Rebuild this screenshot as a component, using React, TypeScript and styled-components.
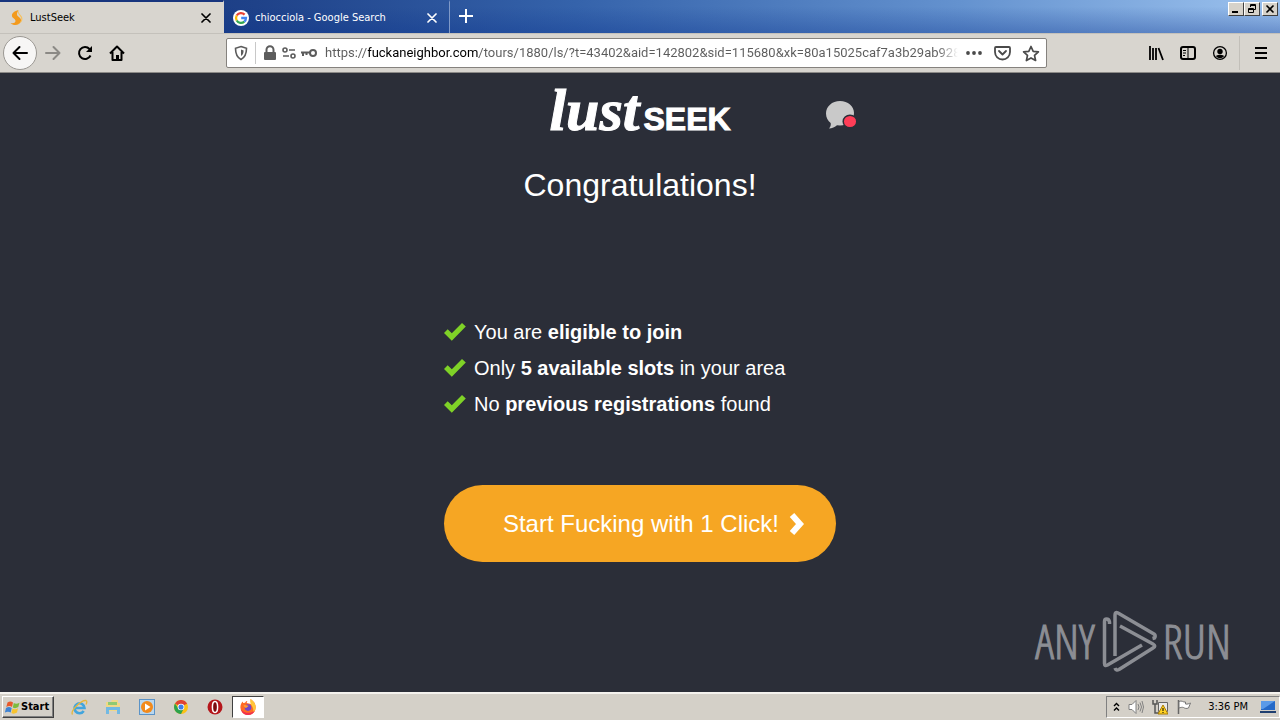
import React from "react";
import styled, { createGlobalStyle } from "styled-components";

const ui = `"DejaVu Sans Condensed", "DejaVu Sans", sans-serif`;

const Global = createGlobalStyle`
  * { box-sizing: border-box; }
  body { margin: 0; background: #2b2e38; font-family: "Liberation Sans", Arial, sans-serif; }
  button { font: inherit; color: inherit; border: 0; padding: 0; background: none; }
  svg { display: block; flex: none; }
`;

const Screen = styled.div`
  min-height: 100vh;
  display: flex;
  flex-direction: column;
`;

const TabStrip = styled.div`
  display: flex;
  height: 33px;
  background:
    linear-gradient(180deg, rgba(10, 36, 106, 0) 20%, rgba(10, 50, 140, 0.35) 100%),
    linear-gradient(90deg, #12307a 0%, #1f4289 20%, #3563ab 45%, #6492cf 75%, #9cc2ee 100%);
  font: 11px/16px ${ui};
`;

const Tab = styled.div<{ $active?: boolean }>`
  display: flex;
  align-items: center;
  gap: 6px;
  width: ${(p) => (p.$active ? 224 : 226)}px;
  padding: 0 8px 0 9px;
  color: ${(p) => (p.$active ? "#000" : "#fff")};
  background: ${(p) => (p.$active ? "#d8d5cf" : "transparent")};
  border-top: 2px solid ${(p) => (p.$active ? "#17357e" : "transparent")};
  border-right: 1px solid ${(p) => (p.$active ? "#d8d5cf" : "#7f99c8")};
`;

const TabTitle = styled.span`
  flex: 1;
  white-space: nowrap;
`;

const IconButton = styled.button`
  display: grid;
  place-items: center;
  width: 32px;
  height: 32px;
`;

const TabClose = styled.button`
  display: grid;
  place-items: center;
  width: 18px;
  height: 18px;
`;

const WindowButtons = styled.div`
  display: flex;
  margin: 2px 2px 0 auto;
  height: 14px;
`;

const WindowButton = styled.button<{ $gap?: boolean }>`
  display: grid;
  place-items: center;
  width: 16px;
  height: 14px;
  margin-left: ${(p) => (p.$gap ? 2 : 0)}px;
  background: #d6d2ca;
  border: 1px solid;
  border-color: #fff #404040 #404040 #fff;
`;

const Toolbar = styled.div`
  display: flex;
  align-items: center;
  height: 40px;
  padding: 0 3px;
  background: #d8d5cf;
  border-top: 1px solid #c4c1bb;
  border-bottom: 1px solid #8c8a87;
`;

const BackButton = styled.button`
  display: grid;
  place-items: center;
  width: 34px;
  height: 34px;
  border-radius: 50%;
  background: #f7f6f5;
  border: 1px solid #9b9893;
`;

const AddressBar = styled.div`
  display: flex;
  align-items: center;
  flex: 0 1 821px;
  min-width: 0;
  height: 30px;
  margin-left: 93px;
  padding: 0 6px;
  background: #fff;
  border: 1px solid #85827e;
  border-radius: 2px;
`;

const Identity = styled.div`
  display: flex;
  align-items: center;
  gap: 4px;
  margin-left: 6px;
  padding-left: 7px;
  height: 22px;
  border-left: 1px solid #c8c8c8;
`;

const Address = styled.input`
  flex: 1;
  min-width: 0;
  height: 26px;
  margin: 0 8px 0 8px;
  padding: 0;
  border: 0;
  outline: 0;
  font: 13px/26px Roboto, sans-serif;
  color: transparent;
  background: linear-gradient(
    90deg,
    #5c5c5c 43px,
    #000 43px,
    #000 154px,
    #5c5c5c 154px,
    #5c5c5c calc(100% - 20px),
    transparent
  );
  background-clip: text;
  -webkit-background-clip: text;
`;

const PageActions = styled.div`
  display: flex;
  align-items: center;
  gap: 11px;
`;

const ToolbarEnd = styled.div`
  display: flex;
  align-items: center;
  margin-left: auto;
`;

const Divider = styled.span`
  width: 1px;
  height: 34px;
  margin: 0 5px 0 3px;
  background: #c2bfb9;
`;

const Page = styled.main`
  position: relative;
  flex: 1;
  display: flex;
  flex-direction: column;
  align-items: center;
  color: #fff;
  background: #2b2e38;
`;

const Header = styled.header`
  display: grid;
  grid-template-columns: 1fr auto 1fr;
  align-items: center;
  width: 434px;
  max-width: 100%;
  height: 72px;
  margin-top: 1px;
`;

const Logo = styled.a`
  grid-column: 2;
  display: flex;
  align-items: baseline;
  gap: 4px;
  color: #fff;
  text-decoration: none;
`;

const LogoScript = styled.span`
  font: italic bold 60px/72px "Liberation Serif", serif;
  -webkit-text-stroke: 1px #fff;
`;

const LogoCaps = styled.span`
  font: bold 32px/72px "Liberation Sans", sans-serif;
  -webkit-text-stroke: 1px #fff;
`;

const ChatButton = styled.button`
  justify-self: end;
`;

const Title = styled.h1`
  margin: 19px 0 0;
  font-weight: 400;
  font-size: 32px;
  line-height: 40px;
`;

const Checks = styled.ul`
  width: 392px;
  margin: 109px 0 0;
  padding: 0;
  list-style: none;
  font-size: 20px;
  line-height: 36px;
`;

const Check = styled.li`
  display: flex;
  align-items: center;
  gap: 8px;
  white-space: nowrap;
`;

const Cta = styled.button`
  && {
    display: flex;
    align-items: center;
    justify-content: flex-end;
    gap: 10px;
    width: 392px;
    height: 77px;
    margin-top: 63px;
    padding-right: 31px;
    border-radius: 39px;
    background: #f6a623;
    font-size: 24px;
    white-space: nowrap;
  }
`;

const Watermark = styled.div`
  position: absolute;
  right: 49px;
  bottom: 19px;
  display: flex;
  align-items: center;
  gap: 6px;
  color: #8c8e94;
  font: 300 47px/64px "Open Sans Condensed Light", "Open Sans Condensed", "Liberation Sans Narrow", sans-serif;
  -webkit-text-stroke: 1px #8c8e94;
`;

const Taskbar = styled.footer`
  display: flex;
  align-items: center;
  height: 28px;
  background: #d4d0c8;
  border-top: 2px solid #f4f2ee;
  font: 11px/16px ${ui};
`;

const StartButton = styled.button`
  display: flex;
  align-items: center;
  gap: 1px;
  width: 52px;
  height: 22px;
  margin: 0 8px 0 2px;
  padding: 0 2px;
  font-weight: bold;
  background: #d4d0c8;
  border: 1px solid;
  border-color: #fff #404040 #404040 #fff;
  box-shadow: inset -1px -1px #808080;
`;

const TaskButton = styled.button<{ $active?: boolean }>`
  && {
    display: grid;
    place-items: center;
    width: ${(p) => (p.$active ? 32 : 34)}px;
    height: 22px;
    background: ${(p) => (p.$active ? "#fff" : "none")};
    border: ${(p) => (p.$active ? "1px solid" : "0")};
    border-color: #404040 #fff #fff #404040;
  }
`;

const Tray = styled.div`
  display: flex;
  align-items: center;
  gap: 8px;
  height: 22px;
  margin-left: auto;
  padding: 0 3px 0 6px;
  border: 1px solid;
  border-color: #808080 #fff #fff #808080;
`;

const Clock = styled.time`
  margin: 0 4px 0 8px;
  white-space: nowrap;
`;

const Cross = ({ color }: { color: string }) => (
  <svg width="10" height="10" stroke={color} strokeWidth="1.7" strokeLinecap="round">
    <path d="M1 1l8 8M9 1l-8 8" />
  </svg>
);

const GoogleIcon = () => (
  <svg width="16" height="16" viewBox="0 0 16 16" fill="none" strokeWidth="2.3">
    <circle cx="8" cy="8" r="8" fill="#fff" />
    <path d="M11.6 4.6A5 5 0 0 0 3.7 5.5" stroke="#ea4335" />
    <path d="M3.7 5.5a5 5 0 0 0 0 5" stroke="#fbbc05" />
    <path d="M3.7 10.5a5 5 0 0 0 7.6 1.2" stroke="#34a853" />
    <path d="M11.3 11.7A5 5 0 0 0 13 8H8.2" stroke="#4285f4" />
  </svg>
);

const CheckIcon = () => (
  <svg width="22" height="18" viewBox="0 0 22 18">
    <path d="M0 10l3.7-3.7 4.1 4L18 0l3.8 3.4L7.8 17.8z" fill="#7fd227" />
  </svg>
);

const ChromeIcon = () => (
  <svg width="14" height="14" viewBox="0 0 16 16">
    <circle cx="8" cy="8" r="8" fill="#fbc116" />
    <path d="M8 8L1.1 4A8 8 0 0 1 15 4z" fill="#df4335" />
    <path d="M1.1 4A8 8 0 0 0 8 16l3-6-5 1z" fill="#2da24d" />
    <circle cx="8" cy="8" r="3.8" fill="#fff" />
    <circle cx="8" cy="8" r="2.9" fill="#3f7fe8" />
  </svg>
);

const FirefoxIcon = () => (
  <svg width="16" height="16" viewBox="0 0 16 16">
    <path d="M8 16a7.6 7.6 0 0 1-7.6-8C.4 5.500 1.700 3.600 2.600 2.400L3.200 4l1.900-.2C5.500 2.500 6.500 2 7.300 2l-.6 2L11 5c.4-2-.8-3.200-.4-5 3 2 5.100 4.700 5.100 8.300A7.700 7.700 0 0 1 8 16z" fill="#ff6a26" />
    <path d="M10.600 0c3 2 5.100 4.700 5.100 8.300 0 2-1 4.400-2.700 5.800 1-3-.1-6-2-8.700-.9-1.600-1-3.500-.4-5.400z" fill="#ffc63a" />
    <path d="M1 10.500C2 14.500 5 16 8 16c3.500 0 6-2 7-4.500C11 15 4.500 14.500 1 10.500z" fill="#f1304f" />
    <circle cx="8" cy="8.600" r="3.300" fill="#7048c8" />
    <path d="M3.500 6.500c2-1 3.200.3 5 .2-.3 1.300-2 1.300-2.300 2.300-1.300 0-2.200-1-2.700-2.500z" fill="#ff9d2f" />
  </svg>
);

export default function App() {
  return (
    <Screen>
      <Global />
      <TabStrip>
        <Tab $active>
          <svg width="15" height="16" viewBox="0 0 15 16">
            <path d="M9.500 0C5 1 2.500 3.500 3 6.200c.4 2 3.600 2.600 3.500 4.800C6.400 13 4 13.500 1.500 13c3 3.500 9.500 2.500 10.500-2 .7-3.500-3.800-4-4-6.500C7.900 2.500 9 1.500 9.500 0z" fill="#f39a1d" />
            <path d="M9.500 0C8.500 2.500 9 4 11 6c2.500 3 1.500 7-3 8.500C14 13 14.500 8 12 5.500 10.500 4 9.500 2.500 9.500 0z" fill="#f7c05c" />
          </svg>
          <TabTitle>LustSeek</TabTitle>
          <TabClose aria-label="Close tab"><Cross color="#000" /></TabClose>
        </Tab>
        <Tab>
          <GoogleIcon />
          <TabTitle>chiocciola - Google Search</TabTitle>
          <TabClose aria-label="Close tab"><Cross color="#fff" /></TabClose>
        </Tab>
        <IconButton aria-label="New tab">
          <svg width="14" height="14" stroke="#fff" strokeWidth="2"><path d="M7 0v14M0 7h14" /></svg>
        </IconButton>
        <WindowButtons>
          <WindowButton aria-label="Minimize">
            <svg width="10" height="10"><path d="M1 7h6v2H1z" /></svg>
          </WindowButton>
          <WindowButton aria-label="Restore">
            <svg width="10" height="10" fill="none" stroke="#000"><path d="M3.500 3V.500h5v5H6.500M3 1.500h6M1.500 4.500h5v4h-5zM1 5.500h6" /></svg>
          </WindowButton>
          <WindowButton $gap aria-label="Close">
            <svg width="10" height="10" stroke="#000" strokeWidth="1.600"><path d="M1.500 1.500l7 7M8.500 1.500l-7 7" /></svg>
          </WindowButton>
        </WindowButtons>
      </TabStrip>

      <Toolbar>
        <BackButton aria-label="Back">
          <svg width="16" height="16" fill="none" stroke="#000" strokeWidth="2" strokeLinecap="round" strokeLinejoin="round"><path d="M15 8H1.500M7.500 2l-6 6 6 6" /></svg>
        </BackButton>
        <IconButton aria-label="Forward">
          <svg width="16" height="16" fill="none" stroke="#8b8985" strokeWidth="2" strokeLinecap="round" strokeLinejoin="round"><path d="M1 8h13.500M8.500 2l6 6-6 6" /></svg>
        </IconButton>
        <IconButton aria-label="Reload">
          <svg width="16" height="16" fill="none" stroke="#000" strokeWidth="2"><path d="M13.500 10.500A6 6 0 1 1 12.500 4L14 5.500" /><path d="M15 1v6H9z" fill="#000" stroke="none" /></svg>
        </IconButton>
        <IconButton aria-label="Home">
          <svg width="16" height="16" fill="none" stroke="#000" strokeWidth="2" strokeLinejoin="round"><path d="M1 8.500L8 1.500l7 7M3.500 7v8h9V7" /><path d="M7 15v-5h3v5z" fill="#000" stroke="none" /></svg>
        </IconButton>
        <AddressBar>
          <svg width="16" height="16" fill="none" stroke="#5c5c5c" strokeWidth="1.600"><path d="M8 1.500l5.500 1.800C13.500 9 12 12.500 8 14.500 4 12.500 2.500 9 2.500 3.300z" /><path d="M8 4.500V11c2-1.500 2.500-3 2.600-5.600z" fill="#5c5c5c" stroke="none" /></svg>
          <Identity>
            <svg width="14" height="16"><path d="M3.500 7V4.800a3.500 3.500 0 0 1 7 0V7" fill="none" stroke="#5c5c5c" strokeWidth="2" /><rect x="1" y="7" width="12" height="8" rx="1" fill="#5c5c5c" /></svg>
            <svg width="16" height="16" fill="none" stroke="#5c5c5c" strokeWidth="1.600"><circle cx="4" cy="5" r="2" /><path d="M8 5h6M2 11h6" /><circle cx="12" cy="11" r="2" /></svg>
            <svg width="16" height="16" fill="none" stroke="#5c5c5c" strokeWidth="2"><circle cx="12" cy="8" r="3" /><path d="M9 7.500H0M2 8v3M5.500 8v2" /></svg>
          </Identity>
          <Address
            aria-label="Address"
            readOnly
            value="https://fuckaneighbor.com/tours/1880/ls/?t=43402&aid=142802&sid=115680&xk=80a15025caf7a3b29ab928e"
          />
          <PageActions>
            <svg width="17" height="16" fill="#4a4a4a"><circle cx="2" cy="8" r="1.900" /><circle cx="8" cy="8" r="1.900" /><circle cx="14" cy="8" r="1.900" /></svg>
            <svg width="17" height="16" fill="none" stroke="#4a4a4a" strokeWidth="1.800" strokeLinecap="round" strokeLinejoin="round"><path d="M2 2h13q1 0 1 1v4a7.500 7.500 0 0 1-15 0V3q0-1 1-1z" /><path d="M5 6l3.500 3.500L12 6" /></svg>
            <svg width="18" height="17" fill="none" stroke="#4a4a4a" strokeWidth="1.700" strokeLinejoin="round"><path d="M9 1.500l2.200 4.800 5.200.6-3.900 3.500 1.100 5.100L9 12.900l-4.600 2.600 1.100-5.100-3.900-3.500 5.200-.6z" /></svg>
          </PageActions>
        </AddressBar>
        <ToolbarEnd>
          <IconButton aria-label="Library">
            <svg width="16" height="16" fill="none" stroke="#000" strokeWidth="1.800"><path d="M2 1v14M5 3v12M8 3v12M10.500 3l4.500 12" /></svg>
          </IconButton>
          <IconButton aria-label="Sidebars">
            <svg width="16" height="16" fill="none" stroke="#000" strokeWidth="2"><rect x="1" y="2" width="14" height="12" rx="2" /><path d="M8 2v12M3 5.500h3M3 8h3M3 10.500h2" strokeWidth="1" /></svg>
          </IconButton>
          <IconButton aria-label="Account">
            <svg width="16" height="16"><circle cx="8" cy="8" r="6.400" fill="none" stroke="#000" strokeWidth="1.300" /><circle cx="8" cy="6.500" r="2.700" /><path d="M3.700 11q4.300-2.500 8.600 0-4.300 4.500-8.600 0z" /></svg>
          </IconButton>
          <Divider />
          <IconButton aria-label="Menu">
            <svg width="12" height="12" stroke="#000" strokeWidth="2"><path d="M0 1h12M0 6h12M0 11h12" /></svg>
          </IconButton>
        </ToolbarEnd>
      </Toolbar>

      <Page>
        <Header>
          <Logo href="#" aria-label="LustSeek">
            <LogoScript>lust</LogoScript>
            <LogoCaps>SEEK</LogoCaps>
          </Logo>
          <ChatButton aria-label="Messages">
            <svg width="32" height="28" viewBox="0 0 32 28">
              <path d="M15 0c8 0 14 5 14 12s-6 12.500-14 12.500l-3-.2C10 26 7 27.500 4 27.500c1.500-1.500 2-3.500 1.700-5.500C3 20 1 16.500 1 12.500 1 5.500 7 0 15 0z" fill="#c9c9c9" />
              <ellipse cx="25" cy="20.500" rx="6.800" ry="6.300" fill="#ff3d57" stroke="#2b2e38" strokeWidth="1.500" />
            </svg>
          </ChatButton>
        </Header>
        <Title>Congratulations!</Title>
        <Checks>
          <Check><CheckIcon /><span>You are <b>eligible to join</b></span></Check>
          <Check><CheckIcon /><span>Only <b>5 available slots</b> in your area</span></Check>
          <Check><CheckIcon /><span>No <b>previous registrations</b> found</span></Check>
        </Checks>
        <Cta>
          Start Fucking with 1 Click!
          <svg width="16" height="24" fill="none" stroke="#fff" strokeWidth="6"><path d="M3 3l8 9-8 9" /></svg>
        </Cta>
        <Watermark>
          <span>ANY</span>
          <svg width="56" height="64" viewBox="0 0 56 64" fill="none" stroke="#8c8e94" strokeWidth="3.500" strokeLinejoin="round">
            <path d="M8.500 15v-2q-.5-3-3-3-2 0-2 2.500v42q0 3 3 1.500L41 36" />
            <path d="M14 47V6q0-3.500 3-2l36 21q2 1.500.5 4l-2 .5" />
            <path d="M19 17l33 18q3.500 2 0 4L18 60.500q-3 1.500-4-1.500" />
          </svg>
          <span>RUN</span>
        </Watermark>
      </Page>

      <Taskbar>
        <StartButton>
          <svg width="15" height="15" viewBox="0 0 15 15">
            <path d="M2.500 2.500q3-2 5.500 0L7 7Q4.500 5 1.300 7z" fill="#e8592b" />
            <path d="M8.800 3q2.500 1.500 5.700-.3L13.300 7q-3 2-5.500.5z" fill="#7dbb3c" />
            <path d="M1 8q3-2 5.700 0l-1 4.500Q3 11-.1 12.500z" fill="#3f83d3" />
            <path d="M7.500 8.500q2.500 1.500 5.500-.3L12 12.500q-3 2-5.600.5z" fill="#f7c32e" />
          </svg>
          Start
        </StartButton>
        <TaskButton aria-label="Internet Explorer">
          <svg width="17" height="17" viewBox="0 0 17 17" fill="none">
            <path d="M4 9h9.500a5 5 0 1 0-.8 3" stroke="#42a5dd" strokeWidth="2.600" />
            <path d="M1.500 15.500C-1 12 10 1 15 1.500c1.500.5.500 3 0 4" stroke="#e5b73c" strokeWidth="1.300" />
          </svg>
        </TaskButton>
        <TaskButton aria-label="Explorer">
          <svg width="16" height="16"><path d="M1 3h5l1-2h6v3h2v8H1z" fill="#f0d888" /><path d="M3 3h9v3H3z" fill="#8fca72" /><path d="M1 8h14v7h-3v-4H4v4H1z" fill="#72b9e3" /></svg>
        </TaskButton>
        <TaskButton aria-label="Media Player">
          <svg width="16" height="16"><rect x=".5" y=".5" width="15" height="15" fill="#b9d7ef" stroke="#5b93c7" /><circle cx="8" cy="8" r="6" fill="#f28a1c" /><path d="M6 4.500L11.500 8 6 11.500z" fill="#fff" /></svg>
        </TaskButton>
        <TaskButton aria-label="Chrome"><ChromeIcon /></TaskButton>
        <TaskButton aria-label="Opera">
          <svg width="16" height="16"><circle cx="8" cy="8" r="7.500" fill="#b5161b" /><ellipse cx="8" cy="8" rx="2.600" ry="5.500" fill="#7c0c10" stroke="#fff" strokeWidth="1.500" /></svg>
        </TaskButton>
        <TaskButton $active aria-label="Firefox"><FirefoxIcon /></TaskButton>
        <Tray>
          <svg width="7" height="10" fill="none" stroke="#000" strokeWidth="1.400"><path d="M1 4l2.500-2.500L6 4M1 8.500L3.500 6 6 8.500" /></svg>
          <svg width="16" height="16" fill="none" stroke="#808080"><path d="M1 5.500h3l4-4v13l-4-4H1z" fill="#fff" /><path d="M10 5q2 3 0 6M12 3.500q3 4.500 0 9M14 2q3 6 0 12" /></svg>
          <svg width="16" height="16"><path d="M6.500 3.500h9v9h-9z" fill="#e9e9e9" stroke="#666" /><path d="M1 1v4h4V1M3 5v9h4" fill="none" stroke="#555" strokeWidth="1.500" /><path d="M11 6l5 9H6z" fill="#ffd324" stroke="#a87b00" /><path d="M10.500 9h1v3h-1zM10.500 13h1v1h-1z" /></svg>
          <svg width="16" height="16"><path d="M2.500 1v14" stroke="#666" strokeWidth="1.500" /><path d="M3 2.500c3-1.500 4 1 6.500.5V5c2 .5 3.500-.5 5-1l-2 5c-2 .8-3.500.5-5-.5C6 8 4.500 8.500 3 9z" fill="#fff" stroke="#777" /></svg>
          <Clock>3:36 PM</Clock>
          <svg width="16" height="14"><path d="M1 1h14v9H1z" fill="#2469c8" /><path d="M1 1h14L3 9H1z" fill="#5a9ae8" /><path d="M0 11h16v2H0z" fill="#1f3f70" /></svg>
        </Tray>
      </Taskbar>
    </Screen>
  );
}
